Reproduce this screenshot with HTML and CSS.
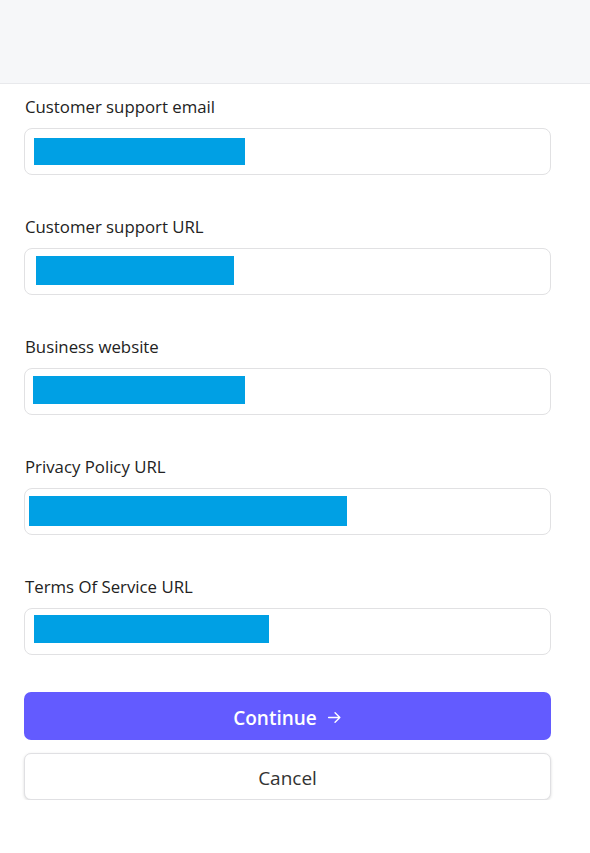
FILE: index.html
```html
<!DOCTYPE html>
<html>
<head>
<meta charset="utf-8">
<link rel="stylesheet" href="styles.css">
</head>
<body>
<div class="header"></div>
<form class="form">
  <div class="field">
    <label class="label">Customer support email</label>
    <div class="input"><span class="redact r1"></span></div>
  </div>
  <div class="field">
    <label class="label">Customer support URL</label>
    <div class="input"><span class="redact r2"></span></div>
  </div>
  <div class="field">
    <label class="label">Business website</label>
    <div class="input"><span class="redact r3"></span></div>
  </div>
  <div class="field">
    <label class="label">Privacy Policy URL</label>
    <div class="input"><span class="redact r4"></span></div>
  </div>
  <div class="field">
    <label class="label">Terms Of Service URL</label>
    <div class="input"><span class="redact r5"></span></div>
  </div>
  <div class="actions">
    <button type="button" class="btn primary">Continue <svg class="arrow" width="15" height="15" viewBox="0 0 14 14"><path d="M1.5 7h10.5M7.5 2.5L12 7l-4.5 4.5" fill="none" stroke="currentColor" stroke-width="1.3" stroke-linecap="round" stroke-linejoin="round"/></svg></button>
    <button type="button" class="btn secondary">Cancel</button>
  </div>
</form>
</body>
</html>
```
FILE: styles.css
```css
html, body {
  margin: 0;
  padding: 0;
  background: #fff;
  font-family: "Open Sans", "Noto Sans", sans-serif;
  color: #222;
}
.header {
  height: 83px;
  background: #f6f7f9;
  border-bottom: 1px solid #e8e9ec;
}
.form {
  padding: 12px 39px 0 24px;
  display: flex;
  flex-direction: column;
}
.field {
  display: flex;
  flex-direction: column;
  margin-bottom: 41px;
}
.label {
  font-size: 16.8px;
  line-height: 22px;
  height: 22px;
  margin: 0 0 10px 1px;
  color: #222;
}
.input {
  height: 45px;
  border: 1px solid #e1e1e3;
  border-radius: 8px;
  display: flex;
  align-items: flex-start;
  box-sizing: content-box;
}
.redact {
  display: block;
  background: #00a0e4;
}
.r1 { width: 211px; height: 27px; margin-left: 9px; margin-top: 9px; }
.r2 { width: 198px; height: 29px; margin-left: 11px; margin-top: 7px; }
.r3 { width: 212px; height: 28px; margin-left: 8px; margin-top: 7px; }
.r4 { width: 318px; height: 30px; margin-left: 4px; margin-top: 7px; }
.r5 { width: 235px; height: 28px; margin-left: 9px; margin-top: 6px; }
.actions {
  display: flex;
  flex-direction: column;
  gap: 13px;
  margin-top: -4px;
}
.btn {
  height: 48px;
  border-radius: 7px;
  font-family: "Open Sans", "Noto Sans", sans-serif;
  font-size: 19px;
  display: flex;
  align-items: center;
  justify-content: center;
  gap: 10px;
  cursor: pointer;
  padding: 3px 0 0;
}
.primary {
  background: #635bff;
  color: #fff;
  border: none;
  font-weight: 600;
}
.secondary {
  background: #fff;
  color: #333;
  border: 1px solid #e0e0e3;
  box-shadow: 0 1px 3px rgba(0,0,0,0.15);
  height: 47px;
}
.arrow { margin-top: -1px; }
```
